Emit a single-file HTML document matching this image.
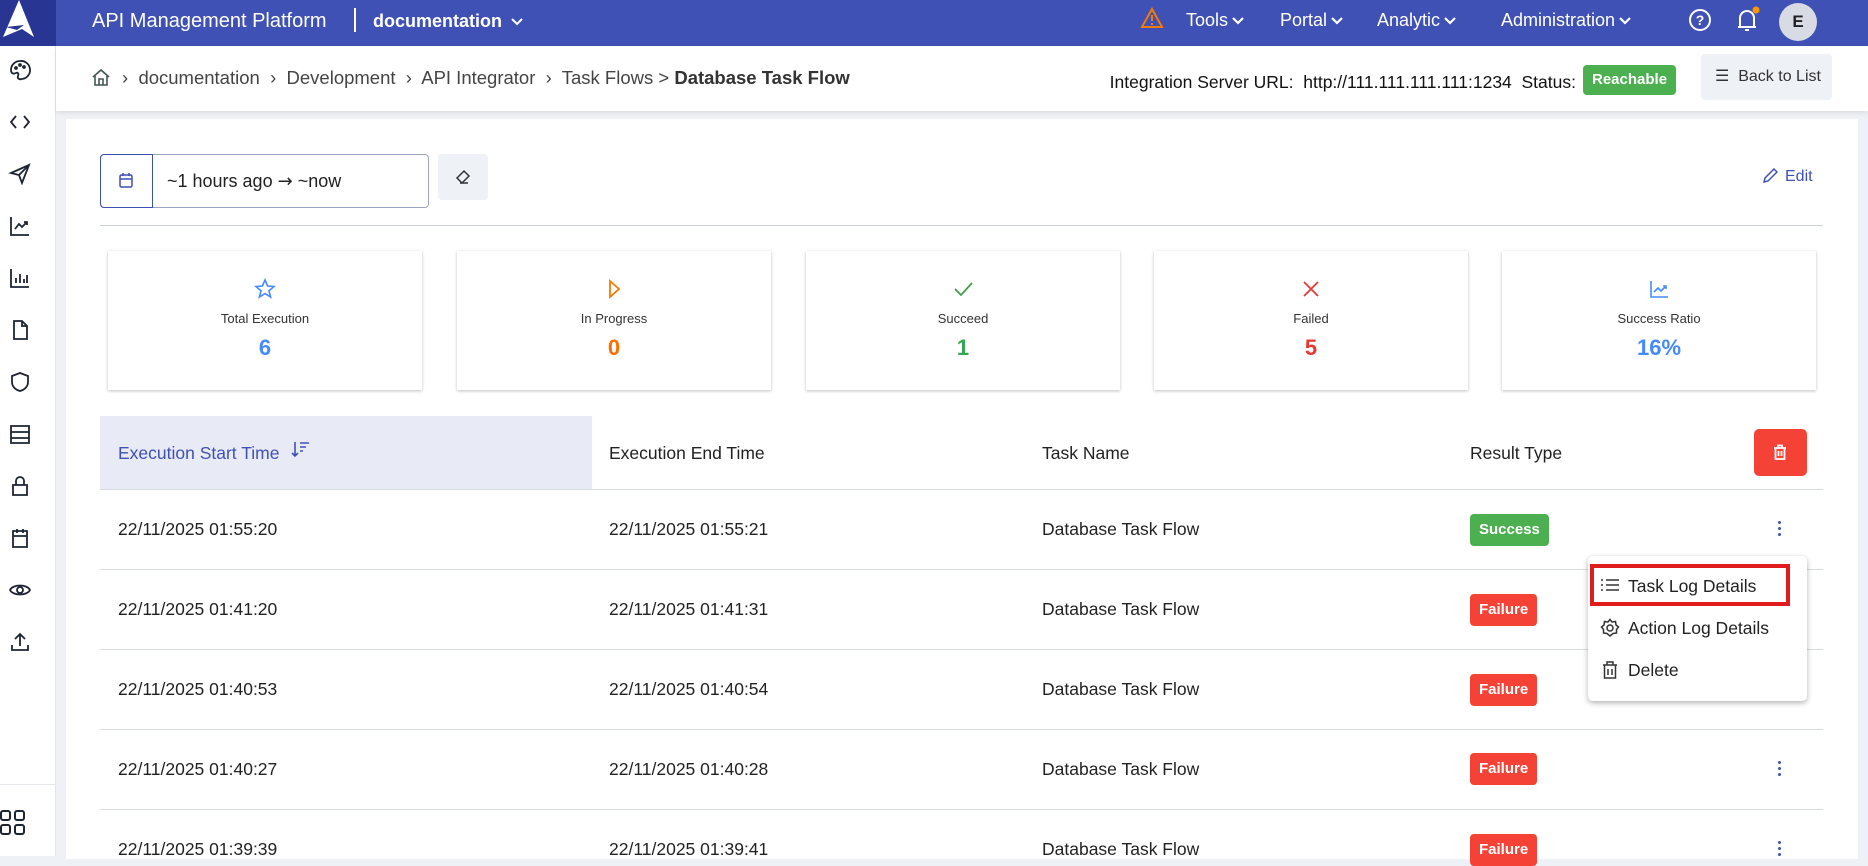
<!DOCTYPE html>
<html><head><meta charset="utf-8">
<style>
*{box-sizing:border-box;margin:0;padding:0}
body{width:1868px;height:856px;overflow:hidden;background:#eef1f5;font-family:"Liberation Sans",sans-serif;color:#222;position:relative}
.a{position:absolute}
svg{display:block}
.hdr{left:0;top:0;width:1868px;height:46px;background:#3f51b5}
.nav{color:#fff;font-size:18px;top:10px;white-space:nowrap}
.nav svg{display:inline-block;vertical-align:middle;margin-left:3px}
.side{left:0;top:46px;width:56px;height:810px;background:#fff;border-right:1px solid #e3e6ec}
.bc{left:56px;top:46px;width:1812px;height:65px;background:#fff;box-shadow:0 2px 4px rgba(0,0,0,.08)}
.card{left:66px;top:119px;width:1792px;height:740px;background:#fff}
.stat{top:251px;width:314px;height:139px;background:#fff;box-shadow:0 1px 3px rgba(0,0,0,.25);text-align:center}
.stat .l{position:absolute;top:60px;width:100%;font-size:13px;color:#333}
.stat .n{position:absolute;top:84px;width:100%;font-size:22px;font-weight:bold}
.stat svg{position:absolute;left:146px;top:27px}
.th{top:416px;height:74px;font-size:17.5px;line-height:74px;color:#222}
.row{left:100px;width:1723px;height:1px;background:#d5d9e0}
.td{font-size:17.5px;color:#222}
.badge{color:#fff;font-weight:bold;font-size:15px;border-radius:4px;height:32px;line-height:32px;padding:0 9px}
.keb{left:1778px;width:4px}
.keb i{display:block;width:3px;height:3px;border-radius:50%;background:#3f51b5;margin:0 0 3px}
</style></head><body>
<div class="a hdr"></div>
<div class="a" style="left:0;top:0;width:56px;height:46px;background:#283593"></div>
<svg class="a" style="left:0;top:0" width="56" height="46"><path d="M19 0 L34 37 L22 29 L3 37 Z" fill="#fff"/><path d="M6 27 L24 25 L17 30 Z" fill="#283593"/></svg>
<div class="a nav" style="left:92px;font-size:20px;top:10px">API Management Platform</div>
<div class="a" style="left:354px;top:8px;width:2px;height:24px;background:#fff"></div>
<div class="a nav" style="left:373px;font-weight:bold;font-size:18px;top:11px">documentation<svg width="14" height="10" style="margin-left:8px"><path d="M2 2 L7 7 L12 2" fill="none" stroke="#fff" stroke-width="2"/></svg></div>
<svg class="a" style="left:1140px;top:7px" width="24" height="22"><path d="M12 2 L22 20 H2 Z" fill="none" stroke="#f57c00" stroke-width="2"/><path d="M12 8v6M12 16v2" stroke="#f57c00" stroke-width="2"/></svg>
<div class="a nav" style="left:1186px">Tools<svg width="14" height="10"><path d="M2 2 L7 7 L12 2" fill="none" stroke="#fff" stroke-width="2.2"/></svg></div>
<div class="a nav" style="left:1280px">Portal<svg width="14" height="10"><path d="M2 2 L7 7 L12 2" fill="none" stroke="#fff" stroke-width="2.2"/></svg></div>
<div class="a nav" style="left:1377px">Analytic<svg width="14" height="10"><path d="M2 2 L7 7 L12 2" fill="none" stroke="#fff" stroke-width="2.2"/></svg></div>
<div class="a nav" style="left:1501px">Administration<svg width="14" height="10"><path d="M2 2 L7 7 L12 2" fill="none" stroke="#fff" stroke-width="2.2"/></svg></div>
<svg class="a" style="left:1688px;top:8px" width="24" height="24"><circle cx="12" cy="12" r="10" fill="none" stroke="#fff" stroke-width="2"/><text x="12" y="17" font-size="14" fill="#fff" text-anchor="middle" font-family="Liberation Sans" font-weight="bold">?</text></svg>
<svg class="a" style="left:1734px;top:6px" width="26" height="28"><path d="M6 21 V12 a7 7 0 0 1 14 0 V21 H4 M22 21 H20 M11 24 h4" fill="none" stroke="#fff" stroke-width="2"/><circle cx="22" cy="4" r="3.5" fill="#ff9800"/></svg>
<div class="a" style="left:1779px;top:3px;width:38px;height:38px;border-radius:50%;background:#d8dbe3;color:#222;font-weight:bold;font-size:17px;text-align:center;line-height:38px">E</div>

<div class="a side"></div>
<svg class="a" style="left:8px;top:58px" width="24" height="600" fill="none" stroke="#1d2433" stroke-width="1.8">
<g><path d="M12 3a9 9 0 0 0-9 9c0 4 3 4 5 3s3 1 2 3 1 4 4 3a9 9 0 1 0-2-18z"/><circle cx="8" cy="10" r="1"/><circle cx="12" cy="7" r="1"/><circle cx="16" cy="9" r="1"/></g>
<g transform="translate(0,52)"><path d="M8 6 L3 12 L8 18 M16 6 L21 12 L16 18"/></g>
<g transform="translate(0,104)"><path d="M3 11 L21 3 L14 21 L11 13 Z M11 13 L21 3"/></g>
<g transform="translate(0,156)"><path d="M3 3 V21 H21 M7 15 L11 10 L14 13 L19 8 M16 8 H19 V11"/></g>
<g transform="translate(0,208)"><path d="M3 3 V21 H21 M8 17 V12 M12 17 V8 M16 17 V13 M19 17 V9"/></g>
<g transform="translate(0,260)"><path d="M6 3 H14 L19 8 V21 H6 Z M14 3 V8 H19"/></g>
<g transform="translate(0,312)"><path d="M12 3 L20 6 V12 C20 17 16 20 12 21 C8 20 4 17 4 12 V6 Z"/></g>
<g transform="translate(0,364)"><path d="M3 4 H21 V10 H3 Z M3 10 H21 V16 H3 Z M3 16 H21 V21 H3 Z"/></g>
<g transform="translate(0,416)"><path d="M5 11 H19 V21 H5 Z M8 11 V7 a4 4 0 0 1 8 0 V11"/></g>
<g transform="translate(0,468)"><path d="M5 5 H19 V21 H5 Z M5 10 H19 M9 3 V7 M15 3 V7"/></g>
<g transform="translate(0,520)"><path d="M2 12 C5 6 19 6 22 12 C19 18 5 18 2 12 Z"/><circle cx="12" cy="12" r="3"/></g>
<g transform="translate(0,572)"><path d="M12 16 V4 M7 9 L12 4 L17 9 M4 15 V20 H20 V15"/></g>
</svg>
<div class="a" style="left:0;top:784px;width:56px;height:1px;background:#e3e6ec"></div>
<svg class="a" style="left:0;top:810px" width="26" height="26" fill="none" stroke="#1d2433" stroke-width="2"><rect x="1" y="1" width="9" height="9" rx="2"/><rect x="15" y="1" width="9" height="9" rx="2"/><rect x="1" y="15" width="9" height="9" rx="2"/><rect x="15" y="15" width="9" height="9" rx="2"/></svg>

<div class="a bc"></div>
<svg class="a" style="left:91px;top:67px" width="20" height="20" fill="none" stroke="#455" stroke-width="1.6"><path d="M2 10 L10 3 L18 10 M4 8 V18 H16 V8 M8 18 V12 H12 V18"/></svg>
<div class="a" style="left:122px;top:67px;font-size:18.5px;color:#444;white-space:pre">›  documentation  ›  Development  ›  API Integrator  ›  Task Flows &gt; <b style="color:#333">Database Task Flow</b></div>
<div class="a" style="right:292px;top:72px;font-size:17.5px;color:#111;white-space:pre">Integration Server URL:  http://111.111.111.111:1234  Status:</div>
<div class="a badge" style="left:1583px;top:65px;height:30px;line-height:30px;background:#4caf50;font-size:15px">Reachable</div>
<div class="a" style="left:1701px;top:54px;width:131px;height:46px;background:#eef1f5;border-radius:4px;font-size:16px;line-height:46px;color:#333;padding-left:14px">☰&nbsp; Back to List</div>

<div class="a card"></div>
<div class="a" style="left:100px;top:154px;width:329px;height:54px;border:1px solid #9aa3c0;border-radius:4px"></div>
<div class="a" style="left:100px;top:154px;width:53px;height:54px;border:1.5px solid #3f51b5;border-radius:4px 0 0 4px"></div>
<svg class="a" style="left:117px;top:171px" width="18" height="18" fill="none" stroke="#3f51b5" stroke-width="1.5"><rect x="3" y="4" width="12" height="12" rx="1.5"/><path d="M3 8 H15 M6 2 V5 M12 2 V5"/></svg>
<div class="a" style="left:167px;top:171px;font-size:18px;color:#222">~1 hours ago <span style="font-family:'DejaVu Sans'">→</span> ~now</div>
<div class="a" style="left:438px;top:154px;width:50px;height:46px;background:#eef1f5;border-radius:4px"></div>
<svg class="a" style="left:454px;top:168px" width="18" height="18" fill="none" stroke="#333" stroke-width="1.5"><path d="M3 10 L10 3 L15 8 L8 15 Z M6 15 H14"/></svg>
<svg class="a" style="left:1760px;top:166px" width="18" height="20" fill="none" stroke="#3f51b5" stroke-width="1.5"><path d="M4 16 L5 12 L14 3 L17 6 L8 15 Z"/></svg>
<div class="a" style="left:1785px;top:168px;font-size:16px;color:#3f51b5">Edit</div>
<div class="a" style="left:100px;top:225px;width:1723px;height:1px;background:#c9d2e3"></div>

<div class="a stat" style="left:108px"><svg width="22" height="22" fill="none" stroke="#448aff" stroke-width="1.6"><path d="M11 2 L13.6 8 L20 8.5 L15 12.8 L16.6 19 L11 15.6 L5.4 19 L7 12.8 L2 8.5 L8.4 8 Z"/></svg><div class="l">Total Execution</div><div class="n" style="color:#448aff">6</div></div>
<div class="a stat" style="left:457px"><svg width="22" height="22" fill="none" stroke="#f57c00" stroke-width="1.8"><path d="M7 3 L16 11 L7 19 Z"/></svg><div class="l">In Progress</div><div class="n" style="color:#ff6d00">0</div></div>
<div class="a stat" style="left:806px"><svg width="22" height="22" fill="none" stroke="#43a047" stroke-width="1.8"><path d="M3 11 L9 17 L20 5"/></svg><div class="l">Succeed</div><div class="n" style="color:#34a853">1</div></div>
<div class="a stat" style="left:1154px"><svg width="22" height="22" fill="none" stroke="#e53935" stroke-width="1.8"><path d="M4 4 L18 18 M18 4 L4 18"/></svg><div class="l">Failed</div><div class="n" style="color:#e53935">5</div></div>
<div class="a stat" style="left:1502px"><svg width="22" height="22" fill="none" stroke="#448aff" stroke-width="1.6"><path d="M3 3 V19 H20 M6 14 L10 10 L13 13 L18 8 M15 8 H18 V11"/></svg><div class="l">Success Ratio</div><div class="n" style="color:#448aff">16%</div></div>

<div class="a" style="left:100px;top:416px;width:492px;height:74px;background:#e8eaf6"></div>
<div class="a th" style="left:118px;color:#3f51b5">Execution Start Time</div>
<svg class="a" style="left:291px;top:440px" width="20" height="20" fill="none" stroke="#3f51b5" stroke-width="1.6"><path d="M4 2 V16 M1 13 L4 16 L7 13 M9 3 H18 M9 7 H15 M9 11 H12"/></svg>
<div class="a th" style="left:609px">Execution End Time</div>
<div class="a th" style="left:1042px">Task Name</div>
<div class="a th" style="left:1470px">Result Type</div>
<div class="a" style="left:1754px;top:429px;width:53px;height:47px;background:#f44336;border-radius:5px"></div>
<svg class="a" style="left:1771px;top:443px" width="18" height="18" fill="none" stroke="#fff" stroke-width="1.8"><path d="M3 5 H15 M7 5 V2.5 H11 V5 M4.5 5 V16 H13.5 V5 M7.5 8 V13 M10.5 8 V13"/></svg>

<div class="a row" style="top:489px"></div>
<div class="a row" style="top:569px"></div>
<div class="a row" style="top:649px"></div>
<div class="a row" style="top:729px"></div>
<div class="a row" style="top:809px"></div>

<div class="a td" style="left:118px;top:519px">22/11/2025 01:55:20</div>
<div class="a td" style="left:609px;top:519px">22/11/2025 01:55:21</div>
<div class="a td" style="left:1042px;top:519px">Database Task Flow</div>
<div class="a badge" style="left:1470px;top:514px;background:#4caf50">Success</div>
<div class="a keb" style="top:521px"><i></i><i></i><i></i></div>

<div class="a td" style="left:118px;top:599px">22/11/2025 01:41:20</div>
<div class="a td" style="left:609px;top:599px">22/11/2025 01:41:31</div>
<div class="a td" style="left:1042px;top:599px">Database Task Flow</div>
<div class="a badge" style="left:1470px;top:594px;background:#f44336">Failure</div>

<div class="a td" style="left:118px;top:679px">22/11/2025 01:40:53</div>
<div class="a td" style="left:609px;top:679px">22/11/2025 01:40:54</div>
<div class="a td" style="left:1042px;top:679px">Database Task Flow</div>
<div class="a badge" style="left:1470px;top:674px;background:#f44336">Failure</div>

<div class="a td" style="left:118px;top:759px">22/11/2025 01:40:27</div>
<div class="a td" style="left:609px;top:759px">22/11/2025 01:40:28</div>
<div class="a td" style="left:1042px;top:759px">Database Task Flow</div>
<div class="a badge" style="left:1470px;top:753px;background:#f44336">Failure</div>
<div class="a keb" style="top:761px"><i></i><i></i><i></i></div>

<div class="a td" style="left:118px;top:839px">22/11/2025 01:39:39</div>
<div class="a td" style="left:609px;top:839px">22/11/2025 01:39:41</div>
<div class="a td" style="left:1042px;top:839px">Database Task Flow</div>
<div class="a badge" style="left:1470px;top:834px;background:#f44336">Failure</div>
<div class="a keb" style="top:841px"><i></i><i></i><i></i></div>

<div class="a" style="left:1588px;top:556px;width:219px;height:145px;background:#fff;border-radius:5px;box-shadow:0 2px 6px rgba(0,0,0,.3)"></div>
<div class="a" style="left:1590px;top:564px;width:200px;height:42px;border:4px solid #e01c1c"></div>
<svg class="a" style="left:1600px;top:577px" width="20" height="16" fill="none" stroke="#333" stroke-width="1.5"><path d="M6 3 H19 M6 8 H19 M6 13 H19 M1 3 H3 M1 8 H3 M1 13 H3"/></svg>
<div class="a" style="left:1628px;top:576px;font-size:17.5px;color:#222">Task Log Details</div>
<svg class="a" style="left:1600px;top:618px" width="20" height="20" fill="none" stroke="#333" stroke-width="1.5"><circle cx="10" cy="10" r="3"/><path d="M10 1.5 L12 4 L15.5 3.5 L16 7 L18.5 9 L16.5 11.5 L16.5 15 L13 15.5 L10 18 L7 15.5 L3.5 15 L3.5 11.5 L1.5 9 L4 7 L4.5 3.5 L8 4 Z"/></svg>
<div class="a" style="left:1628px;top:618px;font-size:17.5px;color:#222">Action Log Details</div>
<svg class="a" style="left:1601px;top:660px" width="18" height="20" fill="none" stroke="#333" stroke-width="1.5"><path d="M2 5 H16 M6 5 V2 H12 V5 M3.5 5 V18 H14.5 V5 M7 9 V15 M11 9 V15"/></svg>
<div class="a" style="left:1628px;top:660px;font-size:17.5px;color:#222">Delete</div>
</body></html>
